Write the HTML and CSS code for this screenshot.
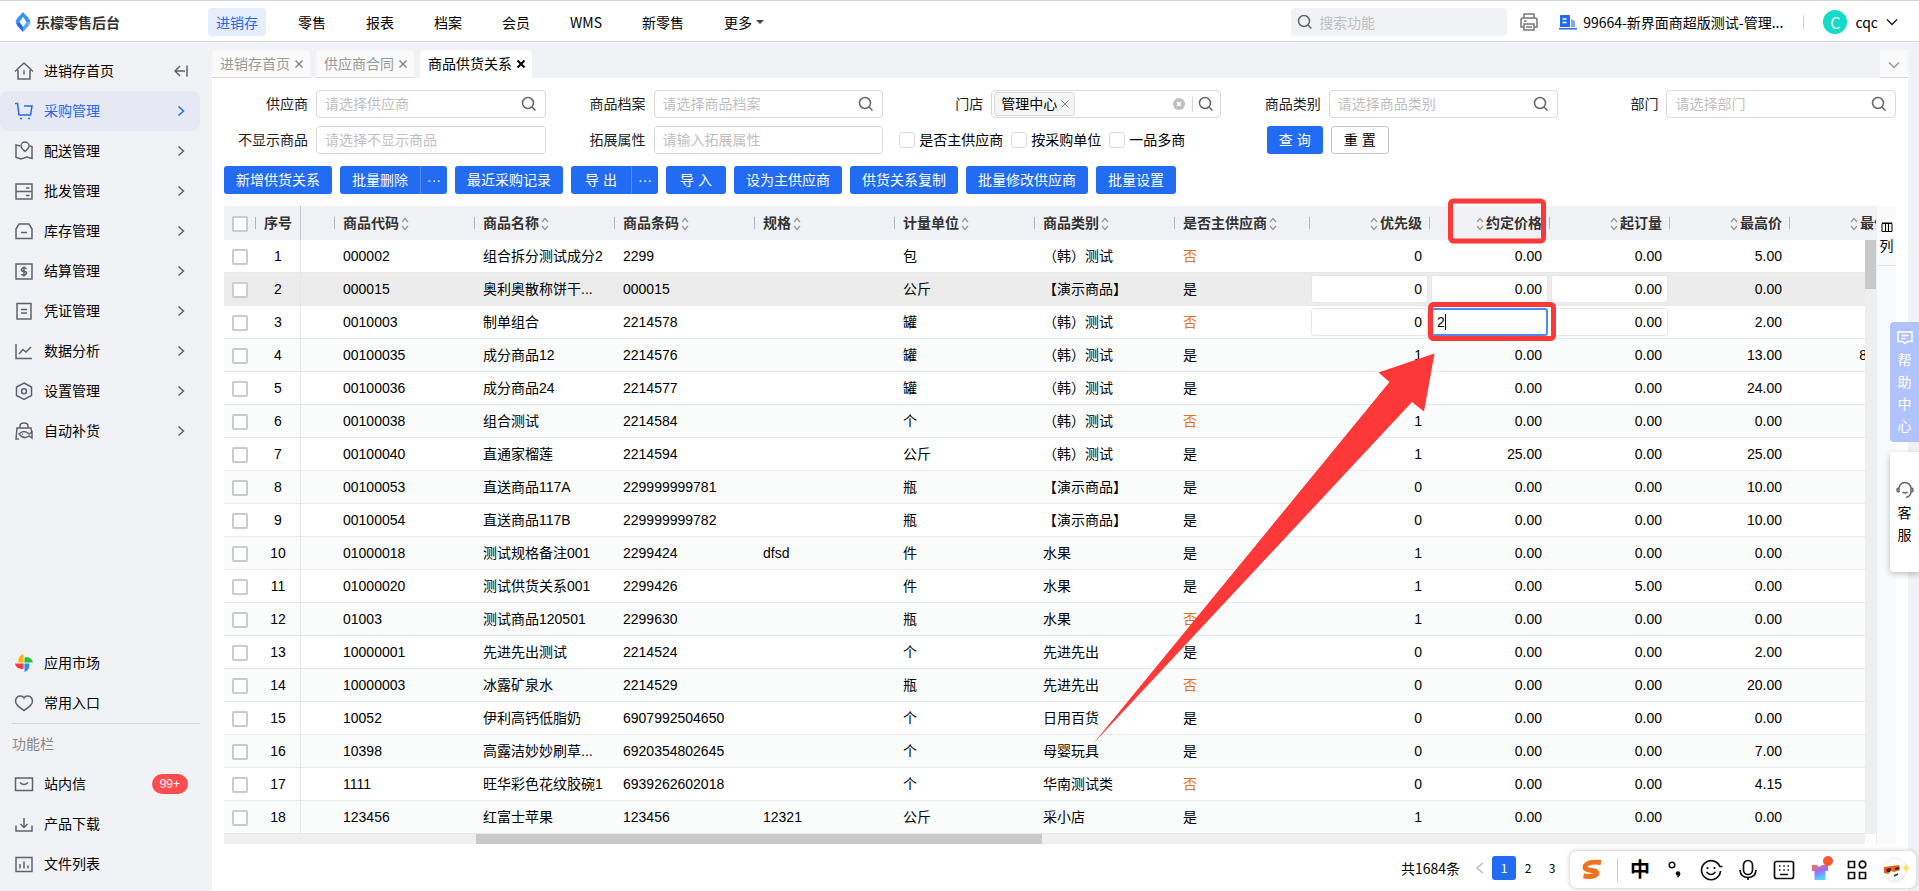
FILE: index.html
```html
<!DOCTYPE html>
<html lang="zh-CN">
<head>
    <meta charset="utf-8">
    <title>乐檬零售后台</title>
    <link rel="stylesheet" href="styles.css">
</head>
<body>
    <!-- shared icons -->
    <svg class="sprite" width="0" height="0">
        <symbol id="i-search" viewBox="0 0 16 16"><circle cx="7" cy="7" r="5.5"/><path d="M11 11l3.5 3.5"/></symbol>
        <symbol id="i-right" viewBox="0 0 8 12"><path d="M1.5 1.5L6.5 6l-5 4.5"/></symbol>
        <symbol id="i-down" viewBox="0 0 12 8"><path d="M1 1.5l5 5 5-5"/></symbol>
        <symbol id="i-sort" viewBox="0 0 8 14"><path d="M1 5l3-3.5L7 5M1 9l3 3.5L7 9"/></symbol>
        <symbol id="i-x" viewBox="0 0 10 10"><path d="M1.5 1.5l7 7M8.500 1.500l-7 7"/></symbol>
    </svg>

    <header class="header">
        <div class="logo">
            <svg width="16" height="20" viewBox="0 0 16 20">
                <path d="M8 0L2 6.500Q0 9 1 11l3.500-1L8 5l3.500 5 3.500 1q1-2-1-4.500z" fill="#3c93f7"/>
                <path d="M1 11l3.500-1L8 15v5L2.500 14z" fill="#2468f2"/>
                <path d="M15 11l-3.500-1L8 15v5l5.500-6z" fill="#59a8ff"/>
            </svg>
            <span>乐檬零售后台</span>
        </div>
        <nav class="nav">
            <a href="#" class="active">进销存</a>
            <a href="#">零售</a>
            <a href="#">报表</a>
            <a href="#">档案</a>
            <a href="#">会员</a>
            <a href="#">WMS</a>
            <a href="#">新零售</a>
            <a href="#">更多<i class="caret"></i></a>
        </nav>
        <div class="header-right">
            <div class="func-search">
                <svg class="icon" width="16" height="16"><use href="#i-search"/></svg>
                <input type="text" placeholder="搜索功能" aria-label="搜索功能">
            </div>
            <svg class="icon printer" width="20" height="20" viewBox="0 0 20 20">
                <path d="M5 6V2h10v4M5 15H2V8q0-2 2-2h12q2 0 2 2v7h-3M5 12h10v6H5zM5 9h2.500M7 15h6"/>
            </svg>
            <div class="company">
                <svg width="18" height="16" viewBox="0 0 18 16">
                    <path d="M1 2q0-1 1-1h8q1 0 1 1v11H1z" fill="#2468f2"/>
                    <path d="M3.500 5h4M3.500 8.500h4" stroke="#fff" stroke-width="1.500"/>
                    <path d="M12 5l4 2v6h-4z" fill="#7da5f8"/>
                    <path d="M0 14.800h18" stroke="#2468f2" stroke-width="1.500"/>
                </svg>
                <span>99664-新界面商超版测试-管理...</span>
            </div>
            <div class="user">
                <span class="avatar">C</span>
                <span>cqc</span>
                <svg class="icon dark" width="12" height="8"><use href="#i-down"/></svg>
            </div>
        </div>
    </header>

    <div class="layout">
        <aside class="sidebar">
            <ul class="menu">
                <li><a href="#">
                    <svg class="icon" width="20" height="20" viewBox="0 0 20 20"><path d="M1 10.500L10 2l9 8.500M4 9v9h12V9M10 9.500v4"/></svg>
                    <span>进销存首页</span>
                    <svg class="icon fold" width="14" height="12" viewBox="0 0 14 12"><path d="M13 .5v11M11 6H1M6 1L1 6l5 5"/></svg>
                </a></li>
                <li class="active"><a href="#">
                    <svg class="icon" width="20" height="20" viewBox="0 0 20 20"><path d="M1 2.500h2.500L5 14h11.500L18 5h-8M6 17.500h2M14 17.500h2"/></svg>
                    <span>采购管理</span>
                    <svg class="icon arrow" width="8" height="12"><use href="#i-right"/></svg>
                </a></li>
                <li><a href="#">
                    <svg class="icon" width="20" height="20" viewBox="0 0 20 20"><path d="M6 5L2 4v12.500l5 1.500 6-2 5 1.500V5.500l-2-.5M11 10.500Q7 7 7 5a4 4 0 0 1 8 0q0 2-4 5.500z"/></svg>
                    <span>配送管理</span>
                    <svg class="icon arrow" width="8" height="12"><use href="#i-right"/></svg>
                </a></li>
                <li><a href="#">
                    <svg class="icon" width="20" height="20" viewBox="0 0 20 20"><path d="M2 3h16v15H2zM2 10.500h16M12 7h3.500M12 14.500h3.500"/></svg>
                    <span>批发管理</span>
                    <svg class="icon arrow" width="8" height="12"><use href="#i-right"/></svg>
                </a></li>
                <li><a href="#">
                    <svg class="icon" width="20" height="20" viewBox="0 0 20 20"><path d="M5 3h10l3 5v9.500H2V8zM7 11.500h6"/></svg>
                    <span>库存管理</span>
                    <svg class="icon arrow" width="8" height="12"><use href="#i-right"/></svg>
                </a></li>
                <li><a href="#">
                    <svg class="icon" width="20" height="20" viewBox="0 0 20 20"><path d="M2 3h16v15H2zM12.500 8q-.5-1.300-2.500-1.300T7.500 8.500 10 10.500t2.500 1.800-2.500 1.900T7.500 13M10 5.500v10"/></svg>
                    <span>结算管理</span>
                    <svg class="icon arrow" width="8" height="12"><use href="#i-right"/></svg>
                </a></li>
                <li><a href="#">
                    <svg class="icon" width="20" height="20" viewBox="0 0 20 20"><path d="M3 2.500h14v15.500H3zM7 8.500h6M7 12h6"/></svg>
                    <span>凭证管理</span>
                    <svg class="icon arrow" width="8" height="12"><use href="#i-right"/></svg>
                </a></li>
                <li><a href="#">
                    <svg class="icon" width="20" height="20" viewBox="0 0 20 20"><path d="M2 3v14.500h16M5 13l4-4.500 3 2.500 5-5"/></svg>
                    <span>数据分析</span>
                    <svg class="icon arrow" width="8" height="12"><use href="#i-right"/></svg>
                </a></li>
                <li><a href="#">
                    <svg class="icon" width="20" height="20" viewBox="0 0 20 20"><path d="M10 2l7.500 4v8.500L10 18.500l-7.500-4V6z"/><circle cx="10" cy="10.300" r="2.500"/></svg>
                    <span>设置管理</span>
                    <svg class="icon arrow" width="8" height="12"><use href="#i-right"/></svg>
                </a></li>
                <li><a href="#">
                    <svg class="icon" width="20" height="20" viewBox="0 0 20 20"><path d="M6 7V5q0-3 4-3t4 3v2M5 18H2L3 7h14l1 6M5 13q5-5 10 0l3-2v6l-3-2q-5 4-10-2zM8 13h1"/></svg>
                    <span>自动补货</span>
                    <svg class="icon arrow" width="8" height="12"><use href="#i-right"/></svg>
                </a></li>
            </ul>

            <ul class="menu menu-bottom">
                <li><a href="#">
                    <svg width="20" height="20" viewBox="0 0 20 20">
                        <path d="M9.500 1v8.500H4.500Q4 2 9.500 1z" fill="#ffb400"/>
                        <path d="M10.500 4.500q7-1 8.500 5h-8.500z" fill="#22c238"/>
                        <path d="M10.500 10.500h5q0 7-5 8.500z" fill="#2d8cf0"/>
                        <path d="M1 10.500h8.500v5.500Q2 16 1 10.500z" fill="#f5383b"/>
                    </svg>
                    <span>应用市场</span>
                </a></li>
                <li><a href="#">
                    <svg class="icon" width="20" height="20" viewBox="0 0 20 20"><path d="M10 17.500Q1 12 1.500 7.500 2.500 3 6.500 3 9 3 10 5q1-2 3.500-2 4 0 5 4.500Q19 12 10 17.500z"/></svg>
                    <span>常用入口</span>
                </a></li>
            </ul>
            <p class="menu-title">功能栏</p>
            <ul class="menu">
                <li><a href="#">
                    <svg class="icon" width="20" height="20" viewBox="0 0 20 20"><path d="M1.500 4h17v12.500h-17zM6 8.500q4 4 8 0"/></svg>
                    <span>站内信</span>
                    <b class="badge">99+</b>
                </a></li>
                <li><a href="#">
                    <svg class="icon" width="20" height="20" viewBox="0 0 20 20"><path d="M2 11.500v5.500h16v-5.500M10 4v9M6.500 10l3.500 3.500 3.500-3.500"/></svg>
                    <span>产品下载</span>
                </a></li>
                <li><a href="#">
                    <svg class="icon" width="20" height="20" viewBox="0 0 20 20"><path d="M2 3.500h16v14H2zM6 10v4.500M10 7.500v7M14 11.500v3"/></svg>
                    <span>文件列表</span>
                </a></li>
            </ul>
        </aside>

        <main class="main">
            <div class="tabs">
                <div class="tab">进销存首页<svg class="icon" width="10" height="10"><use href="#i-x"/></svg></div>
                <div class="tab">供应商合同<svg class="icon" width="10" height="10"><use href="#i-x"/></svg></div>
                <div class="tab active">商品供货关系<svg class="icon" width="10" height="10"><use href="#i-x"/></svg></div>
                <button class="tab-more" aria-label="更多标签"><svg class="icon" width="12" height="8"><use href="#i-down"/></svg></button>
            </div>

            <div class="page">
                <form class="filters">
                    <div class="field">
                        <label for="supplier">供应商</label>
                        <div class="box"><input id="supplier" type="text" placeholder="请选择供应商"><svg class="icon" width="16" height="16"><use href="#i-search"/></svg></div>
                    </div>
                    <div class="field">
                        <label for="goods">商品档案</label>
                        <div class="box"><input id="goods" type="text" placeholder="请选择商品档案"><svg class="icon" width="16" height="16"><use href="#i-search"/></svg></div>
                    </div>
                    <div class="field">
                        <label for="store">门店</label>
                        <div class="box has-tag">
                            <span class="tag">管理中心<svg class="icon" width="10" height="10"><use href="#i-x"/></svg></span>
                            <input id="store" type="text">
                            <svg class="clear" width="12" height="12" viewBox="0 0 12 12"><circle cx="6" cy="6" r="6" fill="#bfbfbf"/><path d="M4 4l4 4M8 4l-4 4" stroke="#fff" stroke-width="1.500"/></svg>
                            <i class="split"></i>
                            <svg class="icon" width="16" height="16"><use href="#i-search"/></svg>
                        </div>
                    </div>
                    <div class="field">
                        <label for="category">商品类别</label>
                        <div class="box"><input id="category" type="text" placeholder="请选择商品类别"><svg class="icon" width="16" height="16"><use href="#i-search"/></svg></div>
                    </div>
                    <div class="field">
                        <label for="dept">部门</label>
                        <div class="box"><input id="dept" type="text" placeholder="请选择部门"><svg class="icon" width="16" height="16"><use href="#i-search"/></svg></div>
                    </div>
                    <div class="field">
                        <label for="hidden-goods">不显示商品</label>
                        <div class="box"><input id="hidden-goods" type="text" placeholder="请选择不显示商品"></div>
                    </div>
                    <div class="field">
                        <label for="extend">拓展属性</label>
                        <div class="box"><input id="extend" type="text" placeholder="请输入拓展属性"></div>
                    </div>
                    <div class="checks">
                        <label><input type="checkbox">是否主供应商</label>
                        <label><input type="checkbox">按采购单位</label>
                        <label><input type="checkbox">一品多商</label>
                    </div>
                    <div class="actions">
                        <button type="button" class="btn">查 询</button>
                        <button type="button" class="btn btn-plain">重 置</button>
                    </div>
                </form>

                <div class="toolbar">
                    <button class="btn">新增供货关系</button>
                    <div class="btn-group"><button class="btn">批量删除</button><button class="btn more" aria-label="更多">···</button></div>
                    <button class="btn">最近采购记录</button>
                    <div class="btn-group"><button class="btn">导 出</button><button class="btn more" aria-label="更多">···</button></div>
                    <button class="btn">导 入</button>
                    <button class="btn">设为主供应商</button>
                    <button class="btn">供货关系复制</button>
                    <button class="btn">批量修改供应商</button>
                    <button class="btn">批量设置</button>
                </div>

                <div class="grid">
                    <div class="grid-main">
                        <div class="grid-view">
                            <table class="table">
                                <colgroup>
                                    <col class="w-check"><col class="w-seq"><col class="w-gap">
                                    <col class="w-text"><col class="w-text"><col class="w-text"><col class="w-text"><col class="w-text"><col class="w-text">
                                    <col class="w-main">
                                    <col class="w-num"><col class="w-num"><col class="w-num"><col class="w-num"><col class="w-num">
                                </colgroup>
                                <thead>
                                    <tr>
                                        <th class="center"><input type="checkbox" aria-label="全选"></th>
                                        <th class="seq">序号</th>
                                        <th></th>
                                        <th>商品代码<svg class="sort"><use href="#i-sort"/></svg></th>
                                        <th>商品名称<svg class="sort"><use href="#i-sort"/></svg></th>
                                        <th>商品条码<svg class="sort"><use href="#i-sort"/></svg></th>
                                        <th>规格<svg class="sort"><use href="#i-sort"/></svg></th>
                                        <th>计量单位<svg class="sort"><use href="#i-sort"/></svg></th>
                                        <th>商品类别<svg class="sort"><use href="#i-sort"/></svg></th>
                                        <th>是否主供应商<svg class="sort"><use href="#i-sort"/></svg></th>
                                        <th class="num"><svg class="sort"><use href="#i-sort"/></svg>优先级</th>
                                        <th class="num"><svg class="sort"><use href="#i-sort"/></svg>约定价格</th>
                                        <th class="num"><svg class="sort"><use href="#i-sort"/></svg>起订量</th>
                                        <th class="num"><svg class="sort"><use href="#i-sort"/></svg>最高价</th>
                                        <th class="num"><svg class="sort"><use href="#i-sort"/></svg>最低价</th>
                                    </tr>
                                </thead>
                                <tbody id="rows"></tbody>
                            </table>
                        </div>
                        <div class="vscroll"><i></i></div>
                        <div class="hscroll"><i></i></div>
                    </div>
                    <div class="grid-side">
                        <svg width="12" height="10" viewBox="0 0 12 10"><path d="M1 1.500h10v8H1zM4.500 1v8M7.500 1v8M1 1h10" fill="none" stroke="#000"/></svg>
                        <span>列</span>
                    </div>
                </div>

                <div class="pager">
                    <span class="total">共1684条</span>
                    <svg class="icon prev" width="8" height="12" viewBox="0 0 8 12"><path d="M7 1L1 6l6 5"/></svg>
                    <a href="#" class="active">1</a>
                    <a href="#">2</a>
                    <a href="#">3</a>
                </div>
            </div>
        </main>
    </div>

    <button class="float help">
        <svg class="icon" width="16" height="16" viewBox="0 0 16 16"><path d="M1 2h14v9.500h-4.500L8 13.500 5.500 11.500H1zM4.500 5.500h7M4.500 8.500h4"/></svg>
        <span>帮</span><span>助</span><span>中</span><span>心</span>
    </button>
    <button class="float service">
        <svg class="icon" width="18" height="18" viewBox="0 0 18 18"><path d="M3 11V7.500a6 6 0 0 1 12 0V11q0 4-5 5.500M3 7Q1 7 1 9t2 2M15 7q2 0 2 2t-2 2M6.500 11q2.500 2 5 0"/></svg>
        <span>客</span><span>服</span>
    </button>

    <!-- input method bar -->
    <div class="ime">
        <svg width="24" height="24" viewBox="0 0 24 24"><path d="M21 4.500Q9 3 5.500 7.500 3.500 12 12 12.500q6 .5 4.500 3.500-3 3.500-13 2" fill="none" stroke="#f0731f" stroke-width="5"/></svg>
        <i class="ime-line"></i>
        <span class="ime-lang">中</span>
        <svg width="24" height="24" viewBox="0 0 24 24"><circle cx="9" cy="7" r="2.800" fill="none" stroke="#111" stroke-width="1.500"/><circle cx="15" cy="15.500" r="2.300" fill="#111"/><path d="M17.300 15.500q0 3-3 4l-.5-.8q1.500-.7 1.700-2z" fill="#111"/></svg>
        <svg class="ime-icon" width="24" height="24" viewBox="0 0 24 24"><path d="M20.800 8.500A9.500 9.500 0 1 0 21.500 13M7.500 14q4.500 5 9 0M8.500 9v2M15.500 9v2M20 8.500h3.500"/></svg>
        <svg class="ime-icon" width="24" height="24" viewBox="0 0 24 24"><rect x="7.500" y="2.500" width="9" height="14" rx="4.500"/><path d="M4 12q.5 7.500 8 7.500t8-7.500M12 19.500V22"/></svg>
        <svg class="ime-icon" width="24" height="24" viewBox="0 0 24 24"><rect x="2.500" y="3.500" width="19" height="17" rx="2"/><path d="M7 8h1.500M11.300 8h1.500M15.500 8H17M7 12h1.500M11.300 12h1.500M15.500 12H17M8 16.500h8"/></svg>
        <svg width="24" height="28" viewBox="0 0 24 28">
            <defs><linearGradient id="shirt" x1="0" y1="0" x2=".4" y2="1"><stop offset="0" stop-color="#ff7a45"/><stop offset=".5" stop-color="#9b6bff"/><stop offset="1" stop-color="#4fd8ff"/></linearGradient></defs>
            <path d="M3 9h5q2 3 5 0h6v6h-2.500v9H5.500v-9H3z" fill="url(#shirt)"/>
            <circle cx="19" cy="5" r="5" fill="#ff5533"/>
        </svg>
        <svg class="ime-icon" width="24" height="24" viewBox="0 0 24 24"><path d="M3.500 3.500h6v6h-6zM3.500 14.500h6v6h-6zM14.500 14.500h6v6h-6z"/><circle cx="17.500" cy="6.500" r="3.300"/></svg>
        <svg width="28" height="28" viewBox="0 0 28 28">
            <circle cx="13" cy="15" r="11.500" fill="#fbeeee"/><circle cx="13" cy="13.500" r="11.500" fill="#fff" stroke="#f1eaea"/>
            <path d="M2 11l15-2 1 5-6 2-3-1-3 3-4-1z" fill="#e8641b"/><path d="M4 13l5-1-1 4H5zM13 12l4-1v2l-4 1z" fill="#3a1d12"/><path d="M12 20l4-2" stroke="#333" stroke-width="1.500"/>
            <path d="M24 7l1.300 3.700L28 12l-2.700 1.300L24 17l-1.300-3.700L20 12l2.700-1.300z" fill="#ffe04a"/>
        </svg>
    </div>

    <!-- red marks pointing at the price column -->
    <svg class="marks" width="1919" height="891" viewBox="0 0 1919 891">
        <rect x="1450.500" y="201" width="93" height="40" rx="3"/>
        <rect x="1430.500" y="304.500" width="123" height="34" rx="3"/>
        <path d="M1434.500 353.500L1378.500 372.500 1389.500 382 1092.500 744.500 1412 402 1424 411.500z"/>
    </svg>

    <script src="script.js"></script>
</body>
</html>
```
FILE: styles.css
```css
* {
    box-sizing: border-box;
}

body {
    margin: 0;
    height: 100vh;
    display: flex;
    flex-direction: column;
    overflow: hidden;
    position: relative;
    font-family: "Liberation Sans", "Noto Sans CJK SC", sans-serif;
    font-size: 14px;
    line-height: 20px;
    color: #000;
    background: #f1f2f5;
}

a {
    color: inherit;
    text-decoration: none;
}

ul {
    list-style: none;
    margin: 0;
    padding: 0;
}

input,
button {
    font: inherit;
    color: inherit;
}

.sprite {
    position: absolute;
}

.icon {
    flex: none;
    fill: none;
    stroke: #666;
    stroke-width: 1.5;
}

/* header */
.header {
    display: flex;
    align-items: center;
    height: 42px;
    flex: none;
    padding: 2px 21px 0 15px;
    background: #fff;
    border-top: 1px solid #d4d4d4;
    border-bottom: 1px solid #d8d8d8;
    font-family: "Noto Sans CJK SC", sans-serif;
}

.logo {
    display: flex;
    align-items: center;
    gap: 5px;
    width: 193px;
    font-weight: bold;
    color: #333;
}

.nav {
    display: flex;
    gap: 24px;
}

.nav a {
    display: flex;
    align-items: center;
    padding: 4px 8px;
    border-radius: 4px;
}

.nav .active {
    color: #2468f2;
    background: #e6edfb;
}

.caret {
    margin-left: 4px;
    border: 4px solid transparent;
    border-top-color: #444;
    border-bottom-width: 0;
}

.header-right {
    display: flex;
    align-items: center;
    margin-left: auto;
}

.func-search {
    display: flex;
    align-items: center;
    gap: 6px;
    width: 216px;
    height: 28px;
    padding: 0 6px;
    border-radius: 4px;
    background: #f1f2f5;
}

.func-search input {
    flex: 1;
    min-width: 0;
    padding: 0;
    border: 0;
    outline: 0;
    background: none;
}

::placeholder {
    color: #bfbfbf;
    opacity: 1;
}

.printer {
    margin: 0 20px 0 12px;
    stroke: #777;
}

.company {
    display: flex;
    align-items: center;
    gap: 6px;
}

.user {
    display: flex;
    align-items: center;
    gap: 8px;
    margin-left: 20px;
    padding-left: 20px;
    background: linear-gradient(#ccc, #ccc) no-repeat left center / 1px 14px;
}

.avatar {
    width: 24px;
    height: 24px;
    border-radius: 50%;
    background: #13dcc8;
    color: #fff;
    font-size: 16px;
    line-height: 24px;
    text-align: center;
}

.dark {
    stroke: #222;
}

.layout {
    display: flex;
    flex: 1;
    min-height: 0;
}

/* sidebar */
.sidebar {
    display: flex;
    flex-direction: column;
    width: 212px;
    flex: none;
    padding: 9px 12px 7px 0;
}

.menu a {
    display: flex;
    align-items: center;
    gap: 10px;
    height: 40px;
    padding: 0 12px 0 14px;
}

.menu span {
    flex: 1;
}

.menu .icon {
    stroke: #5f6270;
}

.menu .arrow {
    margin-right: 3px;
}

.menu .active {
    color: #2468f2;
    background: #e6e9f3;
    border-radius: 8px;
}

.menu .active .icon {
    stroke: #2468f2;
}

.menu-bottom {
    margin-top: auto;
}

.menu-title {
    margin: 0 0 0 12px;
    padding: 10px 0;
    border-top: 1px solid #d5d7db;
    color: #888;
}

.badge {
    height: 20px;
    padding: 0 8px;
    border-radius: 10px;
    background: #ff4d4f;
    color: #fff;
    font-size: 12px;
    font-weight: normal;
}

/* tabs */
.main {
    display: flex;
    flex-direction: column;
    flex: 1;
    min-width: 0;
    padding: 8px 11px 0 0;
}

.tabs {
    display: flex;
    gap: 6px;
}

.tab {
    display: flex;
    align-items: center;
    gap: 4px;
    height: 28px;
    padding: 0 6px 0 8px;
    border-radius: 4px 4px 0 0;
    border-bottom: 1px solid #d9d9d9;
    background: #fafafa;
    color: #999;
}

.tab .icon {
    stroke: #888;
}

.tab.active {
    color: #000;
    background: #fff;
    border-color: #fff;
}

.tab.active .icon {
    stroke: #000;
    stroke-width: 2;
}

.tab-more {
    width: 28px;
    height: 28px;
    margin-left: auto;
    padding: 0;
    border: 0;
    border-bottom: 1px solid #d9d9d9;
    background: #fafafa;
}

.tab-more .icon {
    stroke: #999;
}

.page {
    flex: 1;
    padding: 12px;
    background: #fff;
}

/* filters */
.filters {
    display: grid;
    grid-template-columns: repeat(5, minmax(0, 1fr));
    gap: 8px 4px;
    margin-left: -12px;
}

.field {
    display: flex;
    align-items: center;
    gap: 8px;
}

.field label {
    width: 96px;
    flex: none;
    text-align: right;
    color: #222;
}

.box {
    display: flex;
    align-items: center;
    flex: 1;
    min-width: 0;
    height: 28px;
    padding: 0 8px;
    border: 1px solid #d9d9d9;
    border-radius: 4px;
}

.box input {
    flex: 1;
    min-width: 0;
    padding: 0;
    border: 0;
    outline: 0;
    background: none;
}

.has-tag {
    padding: 0 6px 0 2px;
}

.tag {
    display: flex;
    align-items: center;
    gap: 3px;
    height: 24px;
    padding: 0 4px 0 6px;
    border: 1px solid #d9d9d9;
    border-radius: 3px;
    background: #f5f5f5;
}

.tag .icon {
    stroke: #888;
    stroke-width: 1;
}

.split {
    width: 1px;
    height: 16px;
    margin: 0 5px 0 7px;
    background: #d9d9d9;
}

.checks {
    display: flex;
    align-items: center;
    gap: 8px;
    padding-left: 12px;
    white-space: nowrap;
}

.checks label {
    display: flex;
    align-items: center;
    gap: 4px;
}

input[type=checkbox] {
    appearance: none;
    width: 16px;
    height: 16px;
    margin: 0;
    border: 1px solid #d9d9d9;
    border-radius: 3px;
    background: #fff;
}

.actions {
    display: flex;
    gap: 8px;
    padding-left: 42px;
}

.btn {
    height: 28px;
    min-width: 56px;
    padding: 0 12px;
    border: 0;
    border-radius: 3px;
    background: #226bf3;
    color: #fff;
}

.btn-plain {
    border: 1px solid #c4c4c4;
    background: #fff;
    color: #000;
}

.toolbar {
    display: flex;
    gap: 8px;
    margin: 12px 0;
}

.toolbar .btn {
    min-width: 60px;
}

.btn-group {
    display: flex;
}

.btn-group .btn:first-child {
    border-radius: 3px 0 0 3px;
}

.toolbar .more {
    min-width: 27px;
    padding: 0;
    border-left: 1px solid #5a90f7;
    border-radius: 0 3px 3px 0;
}

/* grid */
.grid {
    display: flex;
}

.grid-main {
    position: relative;
    flex: 1;
    min-width: 0;
}

.grid-view {
    overflow: hidden;
}

/* runs over the right edge of the rows, below the header */
.vscroll {
    position: absolute;
    top: 34px;
    right: 0;
    bottom: 10px;
    width: 11px;
    background: #efefef;
}

.vscroll i {
    display: block;
    height: 49px;
    background: #c9c9c9;
}

.hscroll {
    height: 10px;
    margin-right: 11px;
    padding-left: 252px;
    background: #efefef;
}

.hscroll i {
    display: block;
    width: 566px;
    height: 10px;
    background: #c9c9c9;
}

.grid-side {
    display: flex;
    flex-direction: column;
    align-items: center;
    gap: 4px;
    width: 20px;
    padding-top: 16px;
    border-left: 1px solid #ebedf0;
    background: #f9fafc;
}

.grid-side span {
    padding-bottom: 9px;
    border-bottom: 1px solid #e3e3e3;
    width: 18px;
    text-align: center;
}

.table {
    width: 1686px;
    table-layout: fixed;
    border-collapse: separate;
    border-spacing: 0;
}

.w-check {
    width: 32px;
}

.w-seq {
    width: 45px;
}

.w-gap {
    width: 34px;
}

.w-text {
    width: 140px;
}

.w-main {
    width: 135px;
}

.w-num {
    width: 120px;
}

.table th {
    height: 34px;
    padding: 0 8px;
    text-align: left;
    white-space: nowrap;
    color: #333;
    background: linear-gradient(#a9b4c8, #a9b4c8) no-repeat right center / 1px 12px #f1f2f5;
}

.table td {
    height: 33px;
    padding: 0 8px;
    white-space: nowrap;
    border-bottom: 1px solid #e6e8ea;
}

.table tbody tr:nth-child(even) {
    background: #fafcfc;
}

.table tbody tr.hover {
    background: #ececec;
}

.table .center {
    padding: 0;
    text-align: center;
}

.table .seq {
    padding: 0;
    text-align: center;
    border-right: 1px solid #e4e7ea;
}

.table th.seq {
    background: #f1f2f5;
    border-color: #c5c8d4;
}

.table .num {
    text-align: right;
}

.table .no {
    color: #e37318;
}

.table input[type=checkbox] {
    border: 2px solid #ccc;
    border-radius: 2px;
    vertical-align: middle;
}

.table .edit {
    padding: 0 2px 0 1px;
}

.cell-input {
    display: block;
    width: 100%;
    height: 28px;
    padding: 0 5px;
    border: 1px solid #e6e6e6;
    border-radius: 3px;
    outline: 0;
    background: #fff;
    text-align: right;
}

/* editing cell with its text cursor */
.cell-input.focus {
    padding: 0 4px;
    border: 2px solid #4a8cf7;
    text-align: left;
    background: linear-gradient(#000, #000) no-repeat 12px 4px / 1px 16px #fff;
}

.sort {
    width: 8px;
    height: 14px;
    margin: 0 2px;
    vertical-align: middle;
    fill: none;
    stroke: #999;
    stroke-width: 1.3;
}

.pager {
    display: flex;
    align-items: center;
    justify-content: flex-end;
    margin-top: 12px;
    padding-right: 332px;
    font-family: "Noto Sans CJK SC", sans-serif;
}

.pager .prev {
    margin: 0 8px 0 16px;
    stroke: #bbb;
}

.pager a {
    width: 24px;
    height: 24px;
    border-radius: 3px;
    font-size: 12px;
    line-height: 24px;
    text-align: center;
}

.pager .active {
    background: #226bf3;
    color: #fff;
}

/* floating things */
.float {
    position: absolute;
    right: 0;
    display: flex;
    flex-direction: column;
    align-items: center;
    width: 29px;
    height: 120px;
    padding: 0;
    border: 0;
    border-radius: 4px 0 0 4px;
    line-height: 22px;
}

.help {
    top: 322px;
    padding-top: 8px;
    background: #b1c3fd;
    color: #fff;
}

.help .icon {
    margin-bottom: 3px;
    stroke: #fff;
}

.service {
    top: 452px;
    padding-top: 29px;
    background: #fff;
    box-shadow: 0 2px 6px rgba(0, 0, 0, 0.25);
}

.service .icon {
    margin-bottom: 3px;
}

.ime {
    position: absolute;
    right: 2px;
    bottom: 2px;
    display: flex;
    align-items: center;
    justify-content: space-between;
    width: 348px;
    height: 39px;
    padding: 0 6px 0 10px;
    border: 1px solid #e3e3e3;
    border-radius: 8px;
    background: #fff;
    box-shadow: 0 0 4px rgba(0, 0, 0, 0.15);
}

.ime-line {
    width: 1px;
    height: 24px;
    background: #ccc;
}

.ime-lang {
    font-size: 20px;
    font-weight: bold;
}

.ime-icon {
    fill: none;
    stroke: #111;
    stroke-width: 1.7;
}

.marks {
    position: absolute;
    left: 0;
    top: 0;
    pointer-events: none;
}

.marks rect {
    fill: none;
    stroke: #fc3838;
    stroke-width: 5;
}

.marks path {
    fill: #fc3838;
}
```
FILE: script.js
```javascript
// code, name, barcode, spec, unit, category, main supplier, priority, price, min qty, highest, lowest
var goods = [
    ['000002', '组合拆分测试成分2', '2299', '', '包', '（韩）测试', '否', '0', '0.00', '0.00', '5.00', ''],
    ['000015', '奥利奥散称饼干...', '000015', '', '公斤', '【演示商品】', '是', '0', '0.00', '0.00', '0.00', ''],
    ['0010003', '制单组合', '2214578', '', '罐', '（韩）测试', '否', '0', '2', '0.00', '2.00', ''],
    ['00100035', '成分商品12', '2214576', '', '罐', '（韩）测试', '是', '1', '0.00', '0.00', '13.00', '800.00'],
    ['00100036', '成分商品24', '2214577', '', '罐', '（韩）测试', '是', '1', '0.00', '0.00', '24.00', ''],
    ['00100038', '组合测试', '2214584', '', '个', '（韩）测试', '否', '1', '0.00', '0.00', '0.00', ''],
    ['00100040', '直通家榴莲', '2214594', '', '公斤', '（韩）测试', '是', '1', '25.00', '0.00', '25.00', ''],
    ['00100053', '直送商品117A', '229999999781', '', '瓶', '【演示商品】', '是', '0', '0.00', '0.00', '10.00', ''],
    ['00100054', '直送商品117B', '229999999782', '', '瓶', '【演示商品】', '是', '0', '0.00', '0.00', '10.00', ''],
    ['01000018', '测试规格备注001', '2299424', 'dfsd', '件', '水果', '是', '1', '0.00', '0.00', '0.00', ''],
    ['01000020', '测试供货关系001', '2299426', '', '件', '水果', '是', '1', '0.00', '5.00', '0.00', ''],
    ['01003', '测试商品120501', '2299630', '', '瓶', '水果', '否', '1', '0.00', '0.00', '0.00', ''],
    ['10000001', '先进先出测试', '2214524', '', '个', '先进先出', '是', '0', '0.00', '0.00', '2.00', ''],
    ['10000003', '冰露矿泉水', '2214529', '', '瓶', '先进先出', '否', '0', '0.00', '0.00', '20.00', ''],
    ['10052', '伊利高钙低脂奶', '6907992504650', '', '个', '日用百货', '是', '0', '0.00', '0.00', '0.00', ''],
    ['10398', '高露洁妙妙刷草...', '6920354802645', '', '个', '母婴玩具', '是', '0', '0.00', '0.00', '7.00', ''],
    ['1111', '旺华彩色花纹胶碗1', '6939262602018', '', '个', '华南测试类', '否', '0', '0.00', '0.00', '4.15', ''],
    ['123456', '红富士苹果', '123456', '12321', '公斤', '采小店', '是', '1', '0.00', '0.00', '0.00', '']
];

var editable = [1, 2];
var hovered = 1;

var html = '';
goods.forEach(function(row, i) {
    html += '<tr' + (i === hovered ? ' class="hover"' : '') + '>';
    html += '<td class="center"><input type="checkbox" aria-label="选择"></td>';
    html += '<td class="seq">' + (i + 1) + '</td><td></td>';
    row.forEach(function(value, j) {
        // priority, price and min qty can be edited
        if (editable.indexOf(i) !== -1 && j >= 7 && j <= 9) {
            var focus = i === 2 && j === 8 ? ' focus' : '';
            html += '<td class="edit"><input class="cell-input' + focus + '" type="text" aria-label="编辑" value="' + value + '"></td>';
        } else {
            var cls = j >= 7 ? 'num' : (value === '否' ? 'no' : '');
            html += '<td class="' + cls + '">' + value + '</td>';
        }
    });
    html += '</tr>';
});
document.getElementById('rows').innerHTML = html;
```
